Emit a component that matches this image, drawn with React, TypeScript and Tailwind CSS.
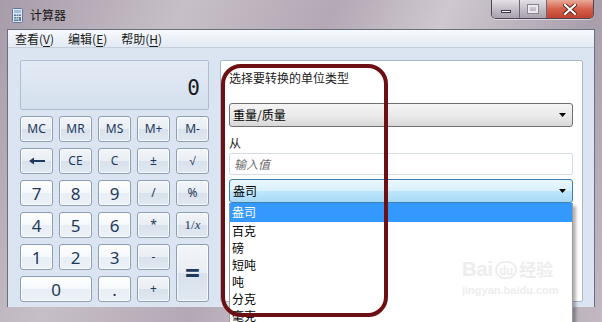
import React from 'react';

const cjk = { fontFamily: '"Noto Sans CJK SC", "Noto Sans", sans-serif' };

type Key = { label: React.ReactNode; num?: boolean; cls?: string; text?: string };

const keys: Key[] = [
  { label: 'MC' }, { label: 'MR' }, { label: 'MS' }, { label: 'M+' }, { label: 'M-' },
  { label: 'back' }, { label: 'CE' }, { label: 'C' }, { label: '±' }, { label: '√' },
  { label: '7', num: true }, { label: '8', num: true }, { label: '9', num: true }, { label: '/' }, { label: '%' },
  { label: '4', num: true }, { label: '5', num: true }, { label: '6', num: true }, { label: '*' },
  { label: '1/x' },
  { label: '1', num: true }, { label: '2', num: true }, { label: '3', num: true }, { label: '-' },
  { label: '=', cls: 'row-span-2' },
  { label: '0', num: true, cls: 'col-span-2' }, { label: '.', num: true }, { label: '+' },
];

function KeyFace({ k }: { k: Key }) {
  if (k.label === 'back') {
    return (
      <svg width="18" height="8" viewBox="0 0 18 8">
        <path d="M1 4 L6 0.5 L6 3 L17 3 L17 5 L6 5 L6 7.5 Z" fill="#1e395b" />
      </svg>
    );
  }
  if (k.label === '1/x') {
    return (
      <span className="text-[13px]" style={{ fontFamily: '"Liberation Serif", serif' }}>
        1/<i>x</i>
      </span>
    );
  }
  if (k.label === '=') return <span className="text-[26px] font-bold leading-none">=</span>;
  if (k.num) return <span className="text-[17px] leading-none">{k.label}</span>;
  if (k.label === '√')
    return <span className="text-[12px] leading-none" style={{ fontFamily: '"Liberation Sans", sans-serif' }}>√</span>;
  return <span className="text-[12px] leading-none">{k.label}</span>;
}

function Menu({ name, acc }: { name: string; acc: string }) {
  return (
    <span className="text-[12px] leading-[18px] text-[#1b1b1b]">
      {name}(<span className="underline underline-offset-2">{acc}</span>)
    </span>
  );
}

const items = ['盎司', '百克', '磅', '短吨', '吨', '分克', '毫克'];

export default function App() {
  return (
    <div
      className="relative w-[602px] h-[322px] overflow-hidden bg-[linear-gradient(115deg,#a79ca9_0%,#c7bfc8_25%,#b3a8b4_45%,#cfc8d0_60%,#a99fab_80%,#c2b9c3_100%)]"
      style={{ fontFamily: '"Noto Sans", "Noto Sans CJK SC", sans-serif' }}
    >
      {/* title bar */}
      <div className="flex h-[29px] items-start">
        <svg className="ml-[12px] mt-[8px]" width="11" height="15" viewBox="0 0 11 15">
          <rect x="0.5" y="0.5" width="10" height="14" rx="1" fill="#dfe8f2" stroke="#5f7895" />
          <rect x="2" y="2" width="7" height="3" fill="#9fc0e0" />
          <rect x="2" y="6.5" width="2" height="1.5" fill="#5f7895" />
          <rect x="4.5" y="6.5" width="2" height="1.5" fill="#5f7895" />
          <rect x="7" y="6.5" width="2" height="1.5" fill="#5f7895" />
          <rect x="2" y="9" width="2" height="1.5" fill="#5f7895" />
          <rect x="4.5" y="9" width="2" height="1.5" fill="#5f7895" />
          <rect x="7" y="9" width="2" height="4" fill="#5f7895" />
          <rect x="2" y="11.5" width="4.5" height="1.5" fill="#5f7895" />
        </svg>
        <span className="ml-[7px] mt-[6px] text-[12px] leading-[18px] text-[#151515]" style={cjk}>
          计算器
        </span>
        <div className="ml-auto mr-[8px] flex h-[19px] overflow-hidden rounded-b-[5px] border border-t-0 border-[#4f4756] shadow-[0_1px_0_rgba(255,255,255,0.5)]">
          <div className="flex w-[28px] items-end justify-center border-r border-[#6d6574] bg-gradient-to-b from-[#e4e0e6] via-[#c4bec8] to-[#a9a1ad] pb-[5px]">
            <div className="h-[3px] w-[10px] border border-[#3d3642] bg-white" />
          </div>
          <div className="flex w-[27px] items-center justify-center border-r border-[#6d6574] bg-gradient-to-b from-[#e4e0e6] via-[#c4bec8] to-[#a9a1ad]">
            <div className="h-[8px] w-[10px] border-2 border-[#ebe8ee] outline outline-1 outline-[#8a8390]" />
          </div>
          <div className="flex w-[46px] items-center justify-center bg-gradient-to-b from-[#e9a999] via-[#d3604b] to-[#c0412c]">
            <svg width="14" height="11" viewBox="0 0 14 11">
              <path d="M2 1 L12 10 M12 1 L2 10" stroke="#5a2018" strokeWidth="4" strokeLinecap="square" />
              <path d="M2 1 L12 10 M12 1 L2 10" stroke="#ffffff" strokeWidth="2.2" strokeLinecap="square" />
            </svg>
          </div>
        </div>
      </div>

      {/* client */}
      <div className="mx-[7px] h-[278px] border border-b-0 border-[#66707e] bg-[#dbe5f2]">
        <div className="flex h-[18px] items-center gap-[14px] border-b border-[#c5cfdc] bg-gradient-to-b from-[#f7f9fd] to-[#e3eaf4] pl-[7px]" style={cjk}>
          <Menu name="查看" acc="V" />
          <Menu name="编辑" acc="E" />
          <Menu name="帮助" acc="H" />
        </div>

        <div className="flex pl-[12px] pt-[12px]">
          {/* calculator keypad */}
          <div className="w-[189px]">
            <div className="flex h-[50px] items-end justify-end rounded-[2px] border border-[#aebdd0] bg-gradient-to-b from-[#e2eaf4] to-[#d5e0ee] pb-[9px] pr-[8px]">
              <span className="text-[21px] leading-[24px] text-[#1a1a1a]" style={{ fontFamily: '"DejaVu Sans Mono", monospace' }}>
                0
              </span>
            </div>
            <div className="mt-[6px] grid grid-cols-[repeat(5,33px)] grid-rows-[repeat(6,26px)] gap-[6px]">
              {keys.map((k, i) => (
                <div
                  key={i}
                  className={`flex items-center justify-center rounded-[3px] border border-[#8e9fb5] text-[#1e395b] shadow-[inset_0_0_0_1px_rgba(255,255,255,0.7)] ${
                    k.num
                      ? 'bg-[linear-gradient(#ffffff,#f5f8fb_50%,#e8eef5_51%,#edf2f8)]'
                      : 'bg-[linear-gradient(#f2f5f9,#e9eef4_50%,#d9e2ec_51%,#e0e8f1)]'
                  } ${k.cls ?? ''}`}
                >
                  <KeyFace k={k} />
                </div>
              ))}
            </div>
          </div>

          {/* unit conversion panel */}
          <div className="relative ml-[11px] h-[242px] w-[363px] rounded-[2px] border border-[#a8b7c9] bg-white pl-[8px] pr-[9px]" style={cjk}>
            <div className="mt-[9px] text-[12px] leading-[16px] text-[#1b1b1b]">选择要转换的单位类型</div>
            <div className="mt-[17px] flex h-[24px] items-center justify-between rounded-[3px] border border-[#707070] bg-gradient-to-b from-[#f4f4f4] via-[#ebebeb] to-[#d8d8d8] pl-[3px] pr-[6px]">
              <span className="text-[12px] leading-[16px] text-black">重量/质量</span>
              <svg width="7" height="4" viewBox="0 0 7 4"><path d="M0 0 H7 L3.5 4 Z" fill="#000" /></svg>
            </div>
            <div className="mt-[8px] text-[12px] leading-[16px] text-[#1b1b1b]">从</div>
            <div className="mt-[2px] flex h-[22px] items-center rounded-[2px] border border-[#d6dce4] pl-[4px]">
              <span className="text-[12px] italic leading-[16px] text-[#6d6d6d]">输入值</span>
            </div>
            <div className="relative mt-[4px]">
              <div className="flex h-[24px] items-center justify-between rounded-[3px] border border-[#3c7fb1] bg-[linear-gradient(#eaf6fd,#d9f0fc_50%,#bee6fd_51%,#a7d9f5)] pl-[3px] pr-[6px]">
                <span className="text-[12px] leading-[16px] text-black">盎司</span>
                <svg width="7" height="4" viewBox="0 0 7 4"><path d="M0 0 H7 L3.5 4 Z" fill="#000" /></svg>
              </div>
              <div className="absolute left-0 right-0 top-full z-10 border border-t-0 border-[#9a9a9a] bg-white pb-[10px] shadow-[3px_3px_3px_rgba(0,0,0,0.3)]">
                {items.map((it, i) => (
                  <div
                    key={it}
                    className={`pl-[2px] text-[12px] ${
                      i === 0 ? 'h-[19px] bg-[#3399ff] leading-[18px] text-white' : 'h-[17px] leading-[17px] text-black'
                    }`}
                  >
                    {it}
                  </div>
                ))}
              </div>
            </div>

            {/* watermark */}
            <div className="pointer-events-none absolute left-[241px] top-[198px] z-20 flex flex-col text-[#ededed]">
              <div className="flex items-end">
                <span className="text-[20px] font-bold leading-[20px]" style={{ fontFamily: '"Liberation Sans", sans-serif' }}>Bai</span>
                <span className="mx-[2px] rounded-full border-2 border-[#ededed] px-[2px] text-[11px] font-bold leading-[14px]">du</span>
                <span className="text-[17px] font-bold leading-[20px]" style={cjk}>经验</span>
              </div>
              <span className="mt-[6px] text-[11px] font-bold leading-[11px]" style={{ fontFamily: '"Liberation Sans", sans-serif' }}>
                jingyan.baidu.com
              </span>
            </div>
          </div>
        </div>
      </div>

      {/* annotation */}
      <div className="pointer-events-none absolute left-[221px] top-[64px] z-30 h-[253px] w-[167px] rounded-[20px] border-4 border-[#6d1013]" />
    </div>
  );
}
